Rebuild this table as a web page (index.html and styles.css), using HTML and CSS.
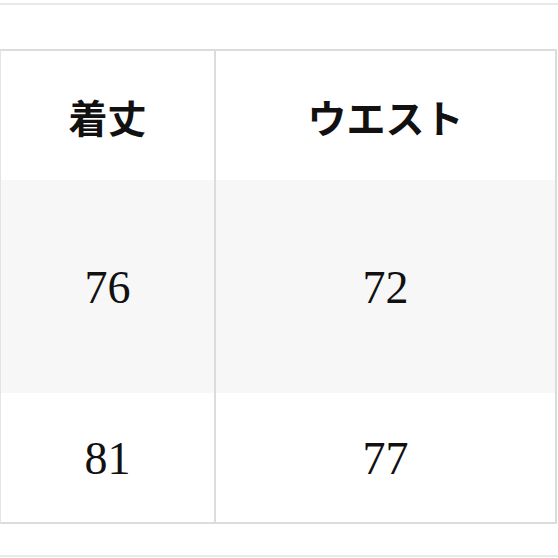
FILE: index.html
```html
<!DOCTYPE html>
<html lang="ja">
<head>
<meta charset="utf-8">
<link rel="stylesheet" href="styles.css">
</head>
<body>
<div class="rule-top"></div>
<div class="size-table">
  <div class="row head">
    <div class="cell">着丈</div>
    <div class="cell">ウエスト</div>
  </div>
  <div class="row alt tall">
    <div class="cell num">76</div>
    <div class="cell num">72</div>
  </div>
  <div class="row">
    <div class="cell num">81</div>
    <div class="cell num">77</div>
  </div>
</div>
<div class="rule-bottom"></div>
</body>
</html>
```

FILE: styles.css
```css
html, body {
  margin: 0;
  padding: 0;
  background: #ffffff;
  width: 558px;
  height: 558px;
  overflow: hidden;
}
.rule-top {
  margin-top: 3px;
  height: 2px;
  background: #e9e9e9;
}
.size-table {
  margin-top: 44px;
  width: 554px;
  border-top: 2px solid #dcdcdc;
  border-left: 1px solid #e4e4e4;
  border-right: 2px solid #dcdcdc;
  border-bottom: 2px solid #dcdcdc;
}
.row {
  display: grid;
  grid-template-columns: 213px 1fr;
  height: 129px;
  background: #ffffff;
}
.row.head {
  height: 129px;
}
.row.tall {
  height: 213px;
}
.row.alt {
  background: #f7f7f7;
}
.cell {
  display: flex;
  align-items: center;
  justify-content: center;
  font-family: "Noto Sans CJK JP", sans-serif;
  font-weight: 700;
  font-size: 39px;
  color: #111111;
}
.cell + .cell {
  border-left: 2px solid #dcdcdc;
}
.cell.num {
  font-family: "Liberation Serif", serif;
  font-weight: 400;
  font-size: 46px;
  padding-top: 2px;
}
.rule-bottom {
  margin-top: 31px;
  height: 2px;
  background: #e9e9e9;
}
```
